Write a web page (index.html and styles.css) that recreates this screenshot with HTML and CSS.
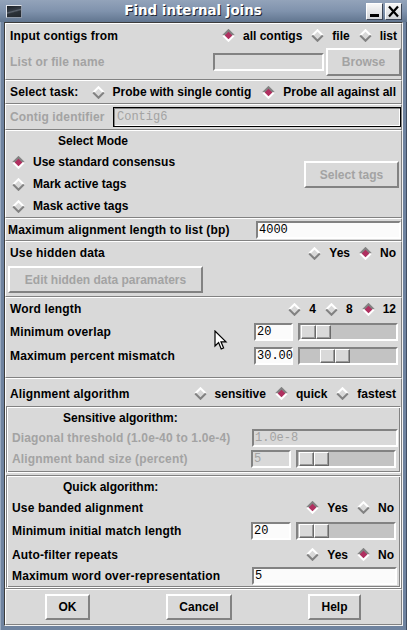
FILE: index.html
```html
<!DOCTYPE html>
<html>
<head>
<meta charset="utf-8">
<title>Find internal joins</title>
<link rel="stylesheet" href="styles.css">
</head>
<body>
<div class="win">
  <div class="titlebar">
    <div class="ticon"></div>
    <div class="ttl">Find internal joins</div>
    <div class="tbtn"><svg viewBox="0 0 15 15" width="15" height="15"><rect x="3" y="10" width="9" height="3" fill="#000"/></svg></div>
    <div class="tbtn"><svg viewBox="0 0 15 15" width="15" height="15"><path d="M3 2.5L12 12.5M12 2.5L3 12.5" stroke="#000" stroke-width="2.2"/></svg></div>
  </div>
  <div class="client">

    <div class="sec s1">
      <div class="row r1">
        <span class="lbl">Input contigs from</span>
        <div class="rg">
          <span class="rb"><svg class="dia" viewBox="0 0 13 13"><path d="M6.5 1.2L11.8 6.5L6.5 11.8L1.2 6.5Z" fill="#b03060"/><path d="M1.2 6.5L6.5 1.2L11.8 6.5" fill="none" stroke="#828282" stroke-width="2"/><path d="M1.2 6.5L6.5 11.8L11.8 6.5" fill="none" stroke="#fff" stroke-width="2"/></svg>all contigs</span>
          <span class="rb"><svg class="dia" viewBox="0 0 13 13"><path d="M1.2 6.5L6.5 1.2L11.8 6.5" fill="none" stroke="#fff" stroke-width="2"/><path d="M1.2 6.5L6.5 11.8L11.8 6.5" fill="none" stroke="#828282" stroke-width="2"/></svg>file</span>
          <span class="rb"><svg class="dia" viewBox="0 0 13 13"><path d="M1.2 6.5L6.5 1.2L11.8 6.5" fill="none" stroke="#fff" stroke-width="2"/><path d="M1.2 6.5L6.5 11.8L11.8 6.5" fill="none" stroke="#828282" stroke-width="2"/></svg>list</span>
        </div>
      </div>
      <div class="row r2">
        <span class="lbl off">List or file name</span>
        <span class="entry dis e-file"></span>
        <span class="btn off b-browse">Browse</span>
      </div>
    </div>

    <div class="sec s2">
      <div class="row">
        <span class="lbl">Select task:</span>
        <div class="rg rg-task">
          <span class="rb"><svg class="dia" viewBox="0 0 13 13"><path d="M1.2 6.5L6.5 1.2L11.8 6.5" fill="none" stroke="#fff" stroke-width="2"/><path d="M1.2 6.5L6.5 11.8L11.8 6.5" fill="none" stroke="#828282" stroke-width="2"/></svg>Probe with single contig</span>
          <span class="rb"><svg class="dia" viewBox="0 0 13 13"><path d="M6.5 1.2L11.8 6.5L6.5 11.8L1.2 6.5Z" fill="#b03060"/><path d="M1.2 6.5L6.5 1.2L11.8 6.5" fill="none" stroke="#828282" stroke-width="2"/><path d="M1.2 6.5L6.5 11.8L11.8 6.5" fill="none" stroke="#fff" stroke-width="2"/></svg>Probe all against all</span>
        </div>
      </div>
    </div>

    <div class="sec s3">
      <div class="row">
        <span class="lbl off">Contig identifier</span>
        <span class="entry dis e-contig">Contig6</span>
      </div>
    </div>

    <div class="sec s4">
      <div class="mode-col">
        <div class="mode-title">Select Mode</div>
        <div class="mode-rb"><svg class="dia" viewBox="0 0 13 13"><path d="M6.5 1.2L11.8 6.5L6.5 11.8L1.2 6.5Z" fill="#b03060"/><path d="M1.2 6.5L6.5 1.2L11.8 6.5" fill="none" stroke="#828282" stroke-width="2"/><path d="M1.2 6.5L6.5 11.8L11.8 6.5" fill="none" stroke="#fff" stroke-width="2"/></svg>Use standard consensus</div>
        <div class="mode-rb"><svg class="dia" viewBox="0 0 13 13"><path d="M1.2 6.5L6.5 1.2L11.8 6.5" fill="none" stroke="#fff" stroke-width="2"/><path d="M1.2 6.5L6.5 11.8L11.8 6.5" fill="none" stroke="#828282" stroke-width="2"/></svg>Mark active tags</div>
        <div class="mode-rb"><svg class="dia" viewBox="0 0 13 13"><path d="M1.2 6.5L6.5 1.2L11.8 6.5" fill="none" stroke="#fff" stroke-width="2"/><path d="M1.2 6.5L6.5 11.8L11.8 6.5" fill="none" stroke="#828282" stroke-width="2"/></svg>Mask active tags</div>
      </div>
      <span class="btn off b-tags">Select tags</span>
    </div>

    <div class="sec s5">
      <div class="row">
        <span class="lbl">Maximum alignment length to list (bp)</span>
        <span class="entry e-maxlen">4000</span>
      </div>
    </div>

    <div class="sec s6">
      <div class="row r-hidden">
        <span class="lbl">Use hidden data</span>
        <div class="rg rg-r5">
          <span class="rb"><svg class="dia" viewBox="0 0 13 13"><path d="M1.2 6.5L6.5 1.2L11.8 6.5" fill="none" stroke="#fff" stroke-width="2"/><path d="M1.2 6.5L6.5 11.8L11.8 6.5" fill="none" stroke="#828282" stroke-width="2"/></svg>Yes</span>
          <span class="rb"><svg class="dia" viewBox="0 0 13 13"><path d="M6.5 1.2L11.8 6.5L6.5 11.8L1.2 6.5Z" fill="#b03060"/><path d="M1.2 6.5L6.5 1.2L11.8 6.5" fill="none" stroke="#828282" stroke-width="2"/><path d="M1.2 6.5L6.5 11.8L11.8 6.5" fill="none" stroke="#fff" stroke-width="2"/></svg>No</span>
        </div>
      </div>
      <span class="btn off b-edit">Edit hidden data paramaters</span>
    </div>

    <div class="sec s7">
      <div class="row r-word">
        <span class="lbl">Word length</span>
        <div class="rg rg-r5">
          <span class="rb"><svg class="dia" viewBox="0 0 13 13"><path d="M1.2 6.5L6.5 1.2L11.8 6.5" fill="none" stroke="#fff" stroke-width="2"/><path d="M1.2 6.5L6.5 11.8L11.8 6.5" fill="none" stroke="#828282" stroke-width="2"/></svg>4</span>
          <span class="rb"><svg class="dia" viewBox="0 0 13 13"><path d="M1.2 6.5L6.5 1.2L11.8 6.5" fill="none" stroke="#fff" stroke-width="2"/><path d="M1.2 6.5L6.5 11.8L11.8 6.5" fill="none" stroke="#828282" stroke-width="2"/></svg>8</span>
          <span class="rb"><svg class="dia" viewBox="0 0 13 13"><path d="M6.5 1.2L11.8 6.5L6.5 11.8L1.2 6.5Z" fill="#b03060"/><path d="M1.2 6.5L6.5 1.2L11.8 6.5" fill="none" stroke="#828282" stroke-width="2"/><path d="M1.2 6.5L6.5 11.8L11.8 6.5" fill="none" stroke="#fff" stroke-width="2"/></svg>12</span>
        </div>
      </div>
      <div class="row r-slide">
        <span class="lbl">Minimum overlap</span>
        <span class="entry e-small">20</span>
        <span class="scale"><span class="knob" style="margin-left:1px"><i></i><i></i></span></span>
      </div>
      <div class="row r-slide">
        <span class="lbl">Maximum percent mismatch</span>
        <span class="entry e-small">30.00</span>
        <span class="scale"><span class="knob" style="margin-left:20px"><i></i><i></i></span></span>
      </div>
    </div>

    <div class="sec s8">
      <div class="row r-algo">
        <span class="lbl">Alignment algorithm</span>
        <div class="rg rg-r5">
          <span class="rb"><svg class="dia" viewBox="0 0 13 13"><path d="M1.2 6.5L6.5 1.2L11.8 6.5" fill="none" stroke="#fff" stroke-width="2"/><path d="M1.2 6.5L6.5 11.8L11.8 6.5" fill="none" stroke="#828282" stroke-width="2"/></svg>sensitive</span>
          <span class="rb"><svg class="dia" viewBox="0 0 13 13"><path d="M6.5 1.2L11.8 6.5L6.5 11.8L1.2 6.5Z" fill="#b03060"/><path d="M1.2 6.5L6.5 1.2L11.8 6.5" fill="none" stroke="#828282" stroke-width="2"/><path d="M1.2 6.5L6.5 11.8L11.8 6.5" fill="none" stroke="#fff" stroke-width="2"/></svg>quick</span>
          <span class="rb"><svg class="dia" viewBox="0 0 13 13"><path d="M1.2 6.5L6.5 1.2L11.8 6.5" fill="none" stroke="#fff" stroke-width="2"/><path d="M1.2 6.5L6.5 11.8L11.8 6.5" fill="none" stroke="#828282" stroke-width="2"/></svg>fastest</span>
        </div>
      </div>

      <div class="frame f1">
        <div class="ftitle">Sensitive algorithm:</div>
        <div class="row fr-a">
          <span class="lbl off">Diagonal threshold (1.0e-40 to 1.0e-4)</span>
          <span class="entry dis e-diag">1.0e-8</span>
        </div>
        <div class="row fr-b">
          <span class="lbl off">Alignment band size (percent)</span>
          <span class="entry dis e-small">5</span>
          <span class="scale sc-f"><span class="knob" style="margin-left:1px"><i></i><i></i></span></span>
        </div>
      </div>

      <div class="frame f2">
        <div class="ftitle">Quick algorithm:</div>
        <div class="row fq-1">
          <span class="lbl">Use banded alignment</span>
          <div class="rg rg-r5">
            <span class="rb"><svg class="dia" viewBox="0 0 13 13"><path d="M6.5 1.2L11.8 6.5L6.5 11.8L1.2 6.5Z" fill="#b03060"/><path d="M1.2 6.5L6.5 1.2L11.8 6.5" fill="none" stroke="#828282" stroke-width="2"/><path d="M1.2 6.5L6.5 11.8L11.8 6.5" fill="none" stroke="#fff" stroke-width="2"/></svg>Yes</span>
            <span class="rb"><svg class="dia" viewBox="0 0 13 13"><path d="M1.2 6.5L6.5 1.2L11.8 6.5" fill="none" stroke="#fff" stroke-width="2"/><path d="M1.2 6.5L6.5 11.8L11.8 6.5" fill="none" stroke="#828282" stroke-width="2"/></svg>No</span>
          </div>
        </div>
        <div class="row fq-2">
          <span class="lbl">Minimum initial match length</span>
          <span class="entry e-small">20</span>
          <span class="scale sc-f"><span class="knob" style="margin-left:1px"><i></i><i></i></span></span>
        </div>
        <div class="row fq-3">
          <span class="lbl">Auto-filter repeats</span>
          <div class="rg rg-r5">
            <span class="rb"><svg class="dia" viewBox="0 0 13 13"><path d="M1.2 6.5L6.5 1.2L11.8 6.5" fill="none" stroke="#fff" stroke-width="2"/><path d="M1.2 6.5L6.5 11.8L11.8 6.5" fill="none" stroke="#828282" stroke-width="2"/></svg>Yes</span>
            <span class="rb"><svg class="dia" viewBox="0 0 13 13"><path d="M6.5 1.2L11.8 6.5L6.5 11.8L1.2 6.5Z" fill="#b03060"/><path d="M1.2 6.5L6.5 1.2L11.8 6.5" fill="none" stroke="#828282" stroke-width="2"/><path d="M1.2 6.5L6.5 11.8L11.8 6.5" fill="none" stroke="#fff" stroke-width="2"/></svg>No</span>
          </div>
        </div>
        <div class="row fq-4">
          <span class="lbl">Maximum word over-representation</span>
          <span class="entry e-word">5</span>
        </div>
      </div>
    </div>

    <div class="sec s9">
      <span class="btn b-ok">OK</span>
      <span class="btn b-cancel">Cancel</span>
      <span class="btn b-help">Help</span>
    </div>
  </div>

  <svg class="cursor" width="14" height="21" viewBox="0 0 14 21"><path d="M1 1L1 16L4.6 12.6L7.2 19L9.6 18L7 11.8L12 11.8Z" fill="#fff" stroke="#000" stroke-width="1.2" stroke-linejoin="miter"/></svg>
</div>
</body>
</html>
```

FILE: styles.css
```css
* { box-sizing: border-box; margin: 0; padding: 0; }
html, body { width: 407px; height: 630px; overflow: hidden; }
body {
  background: #6d809c;
  font-family: "Liberation Sans", Arial, sans-serif;
  font-weight: bold;
  font-size: 12px;
  line-height: 14px;
  color: #000;
}

.win {
  position: relative;
  width: 407px;
  height: 630px;
  display: flex;
  flex-direction: column;
  background: linear-gradient(90deg, #9aaac0 0, #9aaac0 1px, #6f839f 1px, #6f839f 406px, #3f4d63 406px);
}

/* title bar */
.titlebar {
  height: 22px;
  flex: none;
  display: flex;
  align-items: center;
  padding: 0 5px 0 6px;
  background: linear-gradient(#93a3ba, #8093ad 50%, #61758f);
}
.ticon {
  width: 16px;
  height: 13px;
  flex: none;
  border: 1px solid;
  border-color: #dfe3ea #8d97a6 #8d97a6 #dfe3ea;
  background: linear-gradient(165deg, #1b2026 0, #353c45 40%, #5d6570 48%, #2c3239 58%, #22272d 100%);
}
.ttl {
  flex: 1;
  text-align: center;
  color: #fff;
  font-family: "DejaVu Sans", sans-serif;
  font-weight: bold;
  font-size: 13.4px;
  line-height: 16px;
  text-shadow: 1px 1px 0 #1e2633;
}
.tbtn {
  width: 17px;
  height: 17px;
  flex: none;
  margin-left: 2px;
  border: 1px solid;
  border-color: #ffffff #3d4656 #3d4656 #ffffff;
  background: linear-gradient(#f7f7f7, #d2d5d9);
}
.tbtn svg { display: block; }

/* client area */
.client {
  flex: 1;
  margin: 0 4px 4px 4px;
  background: #d9d9d9;
  border: 1px solid;
  border-color: #3c3c3c #f2f2f2 #f2f2f2 #3c3c3c;
  display: flex;
  flex-direction: column;
}

.sec {
  flex: none;
  border: 1px solid;
  border-color: #ffffff #828282 #828282 #ffffff;
}
.s1 { height: 57px; }
.s2 { height: 24px; }
.s3 { height: 26px; }
.s4 { height: 88px; display: flex; align-items: flex-start; }
.s5 { height: 23px; }
.s6 { height: 56px; }
.s7 { height: 81px; }
.s8 { height: 211px; padding-top: 2px; }
.s9 { flex: 1; display: flex; align-items: center; }

.row {
  display: flex;
  align-items: center;
  padding-left: 4px;
  white-space: nowrap;
}
.lbl { letter-spacing: 0.15px; }
.off { color: #a3a3a3; }

/* radio groups */
.rg {
  display: flex;
  align-items: center;
  margin-left: auto;
  margin-right: 4px;
}
.rg-task, .rg-r5 { margin-right: 5px; }
.rb { display: flex; align-items: center; }
.rg .rb + .rb { margin-left: 9px; }
.rg-task .rb + .rb { margin-left: 11px; }
.dia {
  width: 13px;
  height: 13px;
  flex: none;
  margin-right: 8px;
  display: block;
}

/* entries */
.entry {
  display: flex;
  align-items: center;
  height: 18px;
  flex: none;
  border: 2px solid;
  border-color: #828282 #ffffff #ffffff #828282;
  background: #fbfbfb;
  font-family: "Liberation Mono", "Courier New", monospace;
  font-weight: normal;
  font-size: 12px;
  padding-left: 1px;
  color: #000;
}
.entry.dis { background: #d9d9d9; color: #a3a3a3; }

/* buttons */
.btn {
  display: flex;
  align-items: center;
  justify-content: center;
  flex: none;
  white-space: nowrap;
  border: 2px solid;
  border-color: #ffffff #828282 #828282 #ffffff;
  background: #d9d9d9;
}

/* section 1 */
.r1 { height: 23px; }
.r2 { height: 29px; }
.e-file { margin-left: auto; width: 111px; }
.b-browse { width: 75px; height: 28px; margin-left: 2px; }

/* section 2 */
.s2 .row { height: 22px; }

/* section 3 */
.s3 .row { height: 24px; }
.e-contig {
  margin-left: auto;
  width: 288px;
  height: 20px;
  border: 1px solid #000;
  box-shadow: inset 1px 1px 0 #828282, inset -1px -1px 0 #ffffff;
  padding-left: 3px;
}

/* section 4 */
.mode-col { display: flex; flex-direction: column; }
.mode-title { height: 20px; padding-left: 52px; display: flex; align-items: center; }
.mode-rb { height: 22px; padding-left: 6px; display: flex; align-items: center; white-space: nowrap; }
.b-tags { width: 95px; height: 27px; margin: 30px 2px 0 auto; }

/* section 5 */
.s5 .row { height: 21px; padding-left: 2px; }
.e-maxlen { margin-left: auto; width: 145px; }

/* section 6 */
.r-hidden { height: 22px; }
.b-edit { width: 195px; height: 27px; margin: 2px 0 0 2px; }

/* section 7 */
.r-word { height: 22px; }
.r-slide { height: 24px; }
.e-small { margin-left: auto; width: 39px; }
.scale {
  display: flex;
  align-items: center;
  flex: none;
  width: 100px;
  height: 18px;
  margin-left: 5px;
  margin-right: 3px;
  border: 2px solid;
  border-color: #828282 #ffffff #ffffff #828282;
  background: #c3c3c3;
}
.knob { display: flex; height: 14px; }
.knob i {
  display: block;
  width: 15px;
  height: 14px;
  border: 1px solid;
  border-color: #ffffff #6a6a6a #6a6a6a #ffffff;
  background: #d9d9d9;
  box-shadow: inset -1px -1px 0 #9a9a9a;
}

/* section 8 */
.r-algo { height: 25px; }
.frame {
  padding: 1px;
  border: 1px solid;
  border-color: #828282 #ffffff #ffffff #828282;
  box-shadow: inset 1px 1px 0 #ffffff, inset -1px -1px 0 #828282;
}
.f1 { height: 67px; }
.f2 { height: 113px; margin-top: 2px; }
.ftitle { height: 19px; padding-left: 55px; display: flex; align-items: center; }
.fr-a { height: 21px; }
.fr-b { height: 22px; }
.e-diag { margin-left: auto; margin-right: 1px; width: 146px; }
.frame .e-small { width: 40px; }
.sc-f { margin-right: 3px; }
.fq-1 { height: 23px; }
.fq-2 { height: 24px; }
.fq-3 { height: 23px; }
.fq-4 { height: 20px; }
.e-word { margin-left: auto; margin-right: 2px; width: 145px; }

/* section 9 */
.b-ok { width: 45px; height: 26px; margin-left: 39px; }
.b-cancel { width: 66px; height: 26px; margin-left: 76px; }
.b-help { width: 53px; height: 26px; margin-left: 76px; }

/* mouse pointer overlay */
.cursor {
  position: absolute;
  left: 214px;
  top: 330px;
}
```
